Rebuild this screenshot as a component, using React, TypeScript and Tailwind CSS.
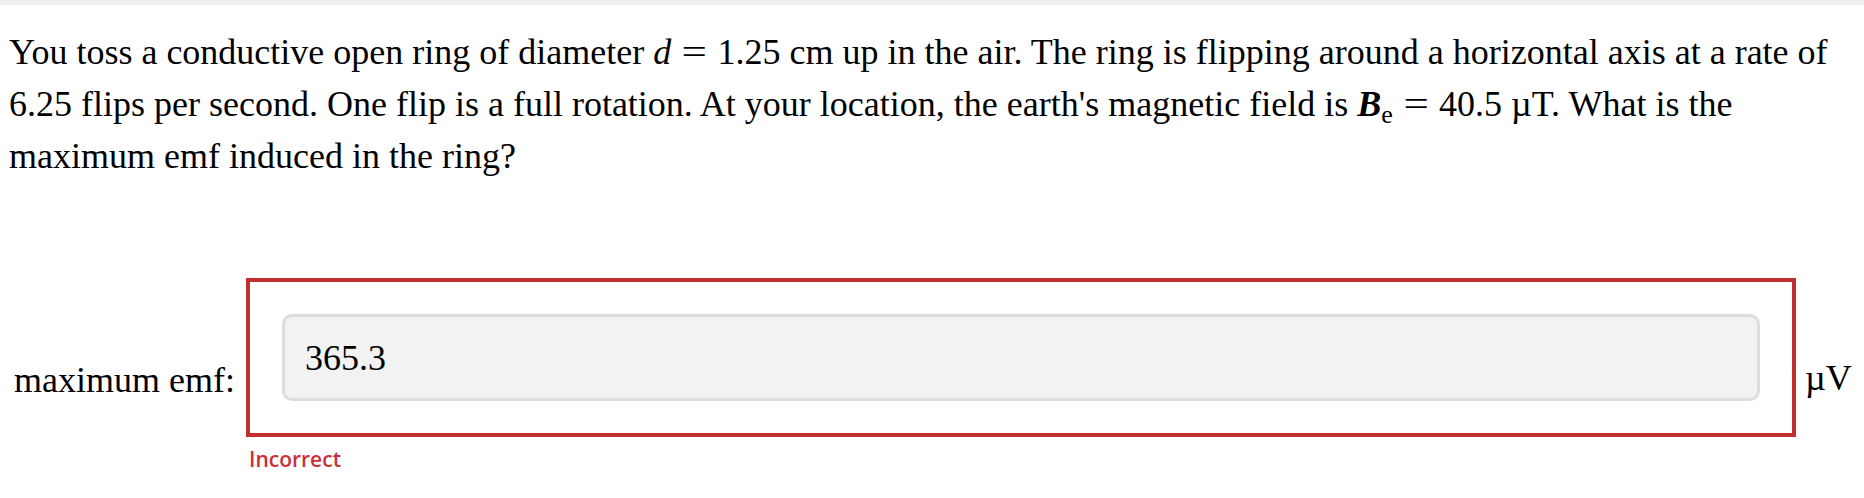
export default function App() {
  return (
    <div className="min-h-screen bg-white text-black">
      <div className="h-[5px] bg-[#efefef]" />
      <div className="px-[9px] pt-[21px] font-['Liberation_Serif',serif] text-[36px] leading-[52px]">
        <p>
          You toss a conductive open ring of diameter <i>d</i>
          <span className="mx-[13px] inline-block scale-x-125">=</span>1.25 cm up in the
          air. The ring is flipping around a horizontal axis at a rate of 6.25 flips per
          second. One flip is a full rotation. At your location, the earth's magnetic
          field is{" "}
          <b>
            <i>B</i>
          </b>
          <sub className="text-[26px]">e</sub>
          <span className="mx-[13px] inline-block scale-x-125">=</span>40.5 µT. What is
          the maximum emf induced in the ring?
        </p>

        <div className="mt-[96px] flex items-start">
          <label className="w-[237px] shrink-0 pl-[5px] pt-[76px]">maximum emf:</label>
          <div className="w-[1550px] shrink-0">
            <div className="border-4 border-[#c0302f] p-[32px]">
              <input
                readOnly
                defaultValue="365.3"
                className="block h-[87px] w-full rounded-[10px] border-[3px] border-[#dddddd] bg-[#f2f2f2] pl-[20px] font-['Liberation_Serif',serif] text-[36px] outline-none"
              />
            </div>
            <div className="mt-[8px] pl-[3px] font-['Open_Sans',sans-serif] text-[21px] font-semibold leading-[28px] text-[#c9303a]">
              Incorrect
            </div>
          </div>
          <span className="ml-[9px] pt-[74px]">µV</span>
        </div>
      </div>
    </div>
  );
}
